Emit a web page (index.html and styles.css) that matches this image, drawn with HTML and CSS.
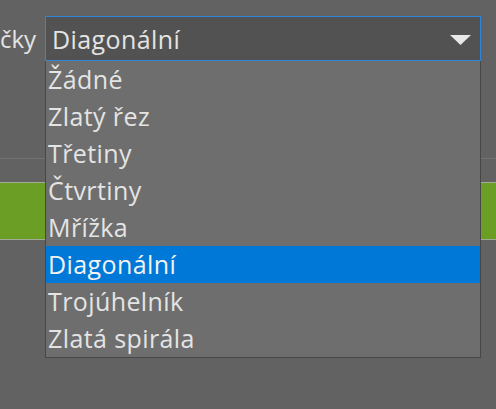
FILE: index.html
```html
<!DOCTYPE html>
<html lang="cs">
<head>
<meta charset="utf-8">
<link rel="stylesheet" href="styles.css">
</head>
<body>
<div class="page">
  <div class="row">
    <div class="label">čky</div>
    <div class="combo">
      <span class="combo-text">Diagonální</span>
      <svg class="arrow" width="21" height="10" viewBox="0 0 21 10"><polygon points="0,0 21,0 10.5,10" fill="#e8e8e8"/></svg>
    </div>
  </div>
  <div class="divider"></div>
  <div class="green"></div>
  <ul class="dropdown">
    <li class="item">Žádné</li>
    <li class="item">Zlatý řez</li>
    <li class="item">Třetiny</li>
    <li class="item">Čtvrtiny</li>
    <li class="item">Mřížka</li>
    <li class="item selected">Diagonální</li>
    <li class="item">Trojúhelník</li>
    <li class="item">Zlatá spirála</li>
  </ul>
</div>
</body>
</html>
```

FILE: styles.css
```css
html, body {
  margin: 0;
  padding: 0;
  background: #626262;
}
body {
  font-family: "Open Sans", "Noto Sans", sans-serif;
  color: #e4e4e4;
}
.page {
  position: relative;
  width: 496px;
  height: 409px;
  overflow: hidden;
}
.row {
  display: flex;
  align-items: center;
  padding-top: 16px;
}
.label {
  width: 45px;
  flex: none;
  padding-right: 9px;
  box-sizing: border-box;
  text-align: right;
  font-size: 24px;
  white-space: nowrap;
}
.combo {
  width: 436px;
  height: 45px;
  box-sizing: border-box;
  border: 1px solid #2f86d6;
  background: #525252;
  display: flex;
  align-items: center;
  justify-content: space-between;
  padding: 0 9px 0 6px;
}
.combo-text {
  font-size: 25px;
  letter-spacing: 0.4px;
}
.arrow {
  display: block;
  margin-top: 2px;
}
.divider {
  margin-top: 97px;
  height: 1px;
  background: #727272;
}
.green {
  margin-top: 23px;
  height: 56px;
  background: #6b9e24;
  border-top: 1px solid #a4aa98;
  border-bottom: 1px solid #a4aa98;
}
.dropdown {
  position: absolute;
  left: 45px;
  top: 61px;
  width: 436px;
  height: 297px;
  box-sizing: border-box;
  margin: 0;
  padding: 0;
  list-style: none;
  background: #6e6e6e;
  border: 1px solid #474747;
  border-top: none;
}
.item {
  height: 37px;
  line-height: 37px;
  padding-left: 2px;
  font-size: 25px;
  letter-spacing: 0.4px;
  white-space: nowrap;
}
.item.selected {
  background: #0078d7;
  color: #f2f2f2;
}
```
